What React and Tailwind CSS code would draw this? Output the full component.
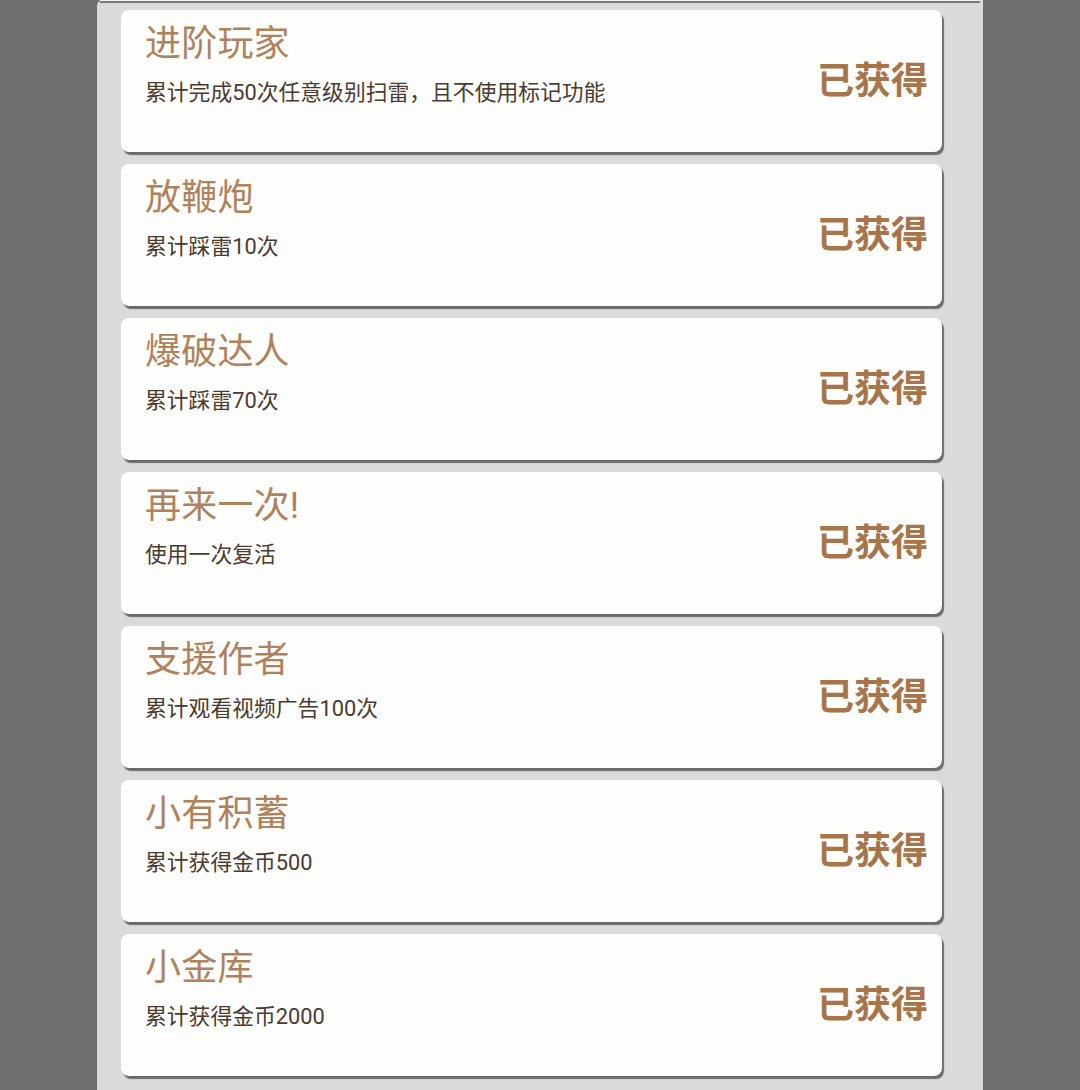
import React from "react";

const items = [
  { t: "进阶玩家", d: "累计完成50次任意级别扫雷，且不使用标记功能" },
  { t: "放鞭炮", d: "累计踩雷10次" },
  { t: "爆破达人", d: "累计踩雷70次" },
  { t: "再来一次!", d: "使用一次复活" },
  { t: "支援作者", d: "累计观看视频广告100次" },
  { t: "小有积蓄", d: "累计获得金币500" },
  { t: "小金库", d: "累计获得金币2000" },
];

function Card({ t, d }) {
  return (
    <div className="flex h-[142px] w-[821px] shrink-0 items-center justify-between rounded-[8px] bg-[#fdfdfb] pl-[24px] pr-[14px] shadow-[2px_3px_1px_#6a6a6a]">
      <div className="flex h-full flex-col pt-[12px]">
        <div className="text-[36px] leading-[44px] tracking-[0.2px] text-[#b0825c]">{t}</div>
        <div className="mt-[12px] text-[21.8px] leading-[30px] text-[#4a3a2f]">{d}</div>
      </div>
      <div className="mt-[2px] text-[37px] font-bold leading-[44px] text-[#a8744a]">已获得</div>
    </div>
  );
}

export default function App() {
  return (
    <div
      className="flex h-[1090px] w-[1080px] overflow-hidden bg-[#6f6f6d]"
      style={{ fontFamily: 'Roboto, "Noto Sans CJK SC", "Noto Sans", sans-serif' }}
    >
      <div className="w-[97px] shrink-0" />
      <div className="flex w-[886px] shrink-0 flex-col rounded-tl-[6px] bg-[#dadada]">
        <div className="mx-[3px] h-[3px] border-b-[2px] border-[#7a7a7a] bg-[#f4f4f2]" />
        <div className="flex flex-col gap-[12px] pl-[24px] pt-[7px]">
          {items.map((it) => (
            <Card key={it.t} {...it} />
          ))}
        </div>
      </div>
      <div className="flex-1" />
    </div>
  );
}
